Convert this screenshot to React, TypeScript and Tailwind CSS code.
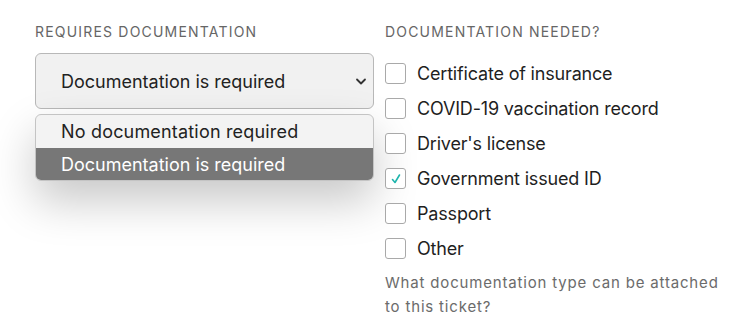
import React from "react";

const font = { fontFamily: "Inter, 'Noto Sans', sans-serif" };

function Checkbox({ checked }: { checked?: boolean }) {
  return (
    <div className="w-[21px] h-[21px] rounded-[3px] border border-[#a9a9a9] bg-white flex items-center justify-center shrink-0">
      {checked && (
        <svg width="12" height="12" viewBox="0 0 12 12" fill="none">
          <path d="M2.5 6.5 L5 9.5 L9.5 2" stroke="#1fb5ad" strokeWidth="1.6" strokeLinecap="round" strokeLinejoin="round" />
        </svg>
      )}
    </div>
  );
}

export default function App() {
  const items = [
    { label: "Certificate of insurance" },
    { label: "COVID-19 vaccination record" },
    { label: "Driver's license" },
    { label: "Government issued ID", checked: true },
    { label: "Passport" },
    { label: "Other" },
  ];
  return (
    <div className="w-[737px] h-[323px] bg-white flex gap-[11px] pl-[35px] pt-[23px] overflow-hidden" style={font}>
      <div className="w-[339px] flex flex-col">
        <div className="h-[18px] text-[14px] leading-[18px] tracking-[0.085em] text-[#666] uppercase">Requires documentation</div>
        <div className="mt-[12px] h-[56px] rounded-[6px] border border-[#b8b8b8] bg-[#f1f1f1] pl-[25px] pr-[6px] flex items-center justify-between text-[18px] text-[#222]">
          <span>Documentation is required</span>
          <svg width="12" height="12" viewBox="0 0 12 12" fill="none">
            <path d="M2 4.5 L6 8.5 L10 4.5" stroke="#333" strokeWidth="1.8" strokeLinecap="round" strokeLinejoin="round" />
          </svg>
        </div>
        <div className="mt-[5px] h-[67px] rounded-[6px] border border-[#c4c4c4] bg-[#f3f3f3] overflow-hidden flex flex-col text-[18px] shadow-[0_20px_45px_rgba(0,0,0,0.22)]">
          <div className="h-[33px] flex items-center pl-[25px] text-[#222] tracking-[0.01em]">No documentation required</div>
          <div className="flex-1 flex items-center pl-[25px] bg-[#777777] text-white">Documentation is required</div>
        </div>
      </div>
      <div className="flex flex-col">
        <div className="h-[18px] text-[14px] leading-[18px] tracking-[0.085em] text-[#666] uppercase">Documentation needed?</div>
        <div className="mt-[22px] flex flex-col gap-[14px]">
          {items.map((it) => (
            <div key={it.label} className="h-[21px] flex items-center gap-[11px] text-[18px] tracking-[-0.01em] text-[#1f1f1f]">
              <Checkbox checked={it.checked} />
              <span>{it.label}</span>
            </div>
          ))}
        </div>
        <div className="mt-[12px] w-[340px] text-[15px] leading-[24px] tracking-[0.055em] text-[#6b6b6b]">
          What documentation type can be attached to this ticket?
        </div>
      </div>
    </div>
  );
}
